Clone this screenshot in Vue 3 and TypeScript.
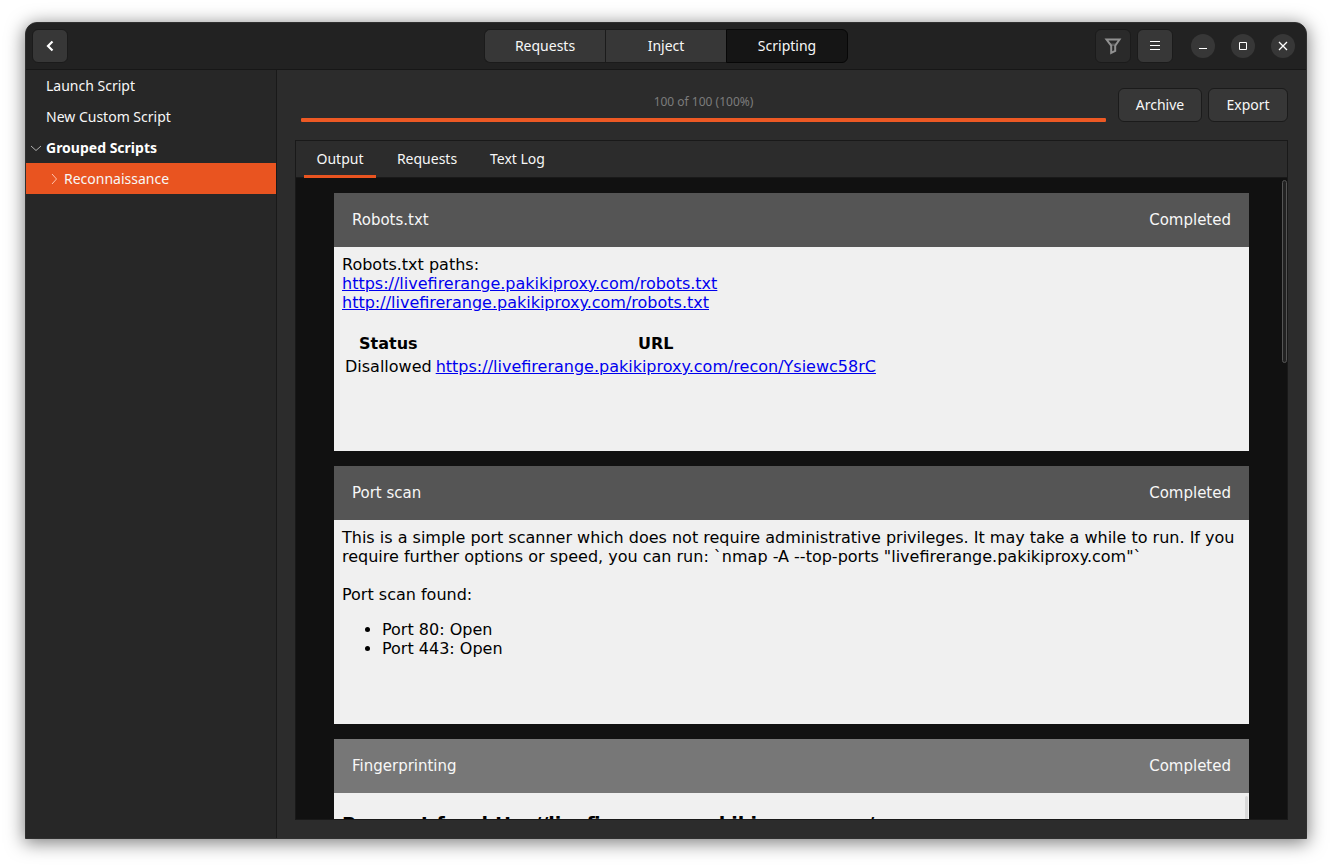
<script setup lang="ts">
import { ref } from 'vue'

const views = ['Requests', 'Inject', 'Scripting']
const activeView = ref('Scripting')
const tabs = ['Output', 'Requests', 'Text Log']
const activeTab = ref('Output')
const progress = { done: 100, total: 100 }
const percent = Math.round((progress.done / progress.total) * 100)
const host = 'livefirerange.pakikiproxy.com'
</script>

<template>
  <div class="desktop">
    <div class="window">
      <header class="titlebar">
        <div class="side">
          <button class="btn icon" aria-label="Back">
            <svg width="16" height="16" viewBox="0 0 16 16"><path d="M10.5 3.5 6 8 10.5 12.5" fill="none" stroke="#fff" stroke-width="2.2" /></svg>
          </button>
        </div>
        <nav class="switcher">
          <button v-for="v in views" :key="v" :class="{ on: v === activeView }" @click="activeView = v">{{ v }}</button>
        </nav>
        <div class="side end">
          <button class="btn icon dim" aria-label="Filter">
            <svg width="18" height="18" viewBox="0 0 18 18"><path d="M2.5 2.5H15.5L11.2 8.7V14L7.2 16V8.7Z" fill="none" stroke="#919191" stroke-width="2" /><path d="M5.5 6.5H12.5L10.5 9H7.5Z" fill="#919191" opacity=".45" /></svg>
          </button>
          <button class="btn icon" aria-label="Menu">
            <svg width="16" height="16" viewBox="0 0 16 16"><path d="M3 3.5H13M3 7.5H13M3 11.5H13" stroke="#fff" /></svg>
          </button>
          <div class="controls">
            <button aria-label="Minimize"><svg width="16" height="16" viewBox="0 0 16 16"><path d="M4 10.5H12" stroke="#fff" /></svg></button>
            <button aria-label="Maximize"><svg width="16" height="16" viewBox="0 0 16 16"><path d="M4.5 4.5H11.5V11.5H4.5Z" fill="none" stroke="#fff" /></svg></button>
            <button aria-label="Close"><svg width="16" height="16" viewBox="0 0 16 16"><path d="M4 4 12 12M12 4 4 12" stroke="#fff" stroke-width="1.3" /></svg></button>
          </div>
        </div>
      </header>
      <div class="body">
        <aside class="sidebar">
          <button class="row">Launch Script</button>
          <button class="row">New Custom Script</button>
          <button class="row group" aria-expanded="true">
            <svg width="12" height="12" viewBox="0 0 12 12"><path d="M1 4 6 8.5 11 4" fill="none" stroke="#b0b0b0" /></svg>Grouped Scripts
          </button>
          <button class="row child" aria-expanded="false">
            <svg width="12" height="12" viewBox="0 0 12 12"><path d="M4 1 8.5 6 4 11" fill="none" stroke="#ffc3ae" /></svg>Reconnaissance
          </button>
        </aside>
        <main class="main">
          <div class="toolbar">
            <div class="progress">
              <span class="label">{{ progress.done }} of {{ progress.total }} ({{ percent }}%)</span>
              <div class="track"><div class="fill" :style="{ width: percent + '%' }"></div></div>
            </div>
            <div class="actions">
              <button class="btn">Archive</button>
              <button class="btn">Export</button>
            </div>
          </div>
          <section class="panel">
            <nav class="tabs">
              <button v-for="t in tabs" :key="t" :class="{ on: t === activeTab }" @click="activeTab = t">{{ t }}</button>
            </nav>
            <div class="output">
              <article class="card">
                <header><span>Robots.txt</span><span>Completed</span></header>
                <div class="content">
                  Robots.txt paths:<br />
                  <a :href="`https://${host}/robots.txt`">https://{{ host }}/robots.txt</a><br />
                  <a :href="`http://${host}/robots.txt`">http://{{ host }}/robots.txt</a><br /><br />
                  <table>
                    <thead><tr><th>Status</th><th>URL</th></tr></thead>
                    <tbody>
                      <tr><td>Disallowed</td><td><a :href="`https://${host}/recon/Ysiewc58rC`">https://{{ host }}/recon/Ysiewc58rC</a></td></tr>
                    </tbody>
                  </table>
                </div>
              </article>
              <article class="card">
                <header><span>Port scan</span><span>Completed</span></header>
                <div class="content">
                  This is a simple port scanner which does not require administrative privileges. It may take a while to run. If you require further options or speed, you can run: `nmap -A --top-ports "{{ host }}"`<br /><br />
                  Port scan found:
                  <ul><li>Port 80: Open</li><li>Port 443: Open</li></ul>
                </div>
              </article>
              <article class="card hover">
                <header><span>Fingerprinting</span><span>Completed</span></header>
                <div class="content">
                  <h3>Request for: http://{{ host }}/</h3>
                  <div class="inner-thumb"></div>
                </div>
              </article>
              <div class="thumb"></div>
            </div>
          </section>
        </main>
      </div>
    </div>
  </div>
</template>

<style>
body { margin: 0; background: #fff; }
</style>

<style scoped>
* { box-sizing: border-box; }
button { font: inherit; color: inherit; border: 0; padding: 0; background: none; }
svg { display: block; flex: none; }
.desktop { height: 100vh; padding: 22px 25px 28px; font: 14px/20px "Noto Sans", "Open Sans", sans-serif; color: #f7f7f7; }
.window { height: 100%; display: flex; flex-direction: column; overflow: hidden; background: #2c2c2c; border: 1px solid #303030; border-radius: 12px 12px 0 0; box-shadow: 0 3px 18px 1px rgba(0, 0, 0, .5); }
.titlebar { flex: none; display: flex; align-items: center; height: 47px; padding: 0 6px; background: #222; border-bottom: 1px solid #171717; }
.side { flex: 1; display: flex; align-items: center; }
.side.end { justify-content: flex-end; gap: 6px; }
.btn { display: flex; align-items: center; justify-content: center; height: 34px; padding: 0 16px; background: #373737; border: 1px solid #1b1b1b; border-radius: 6px; }
.btn.icon { width: 36px; padding: 0; }
.btn.dim { background: #2a2a2a; }
.switcher { display: flex; }
.switcher button { width: 121px; height: 34px; background: #373737; border: 1px solid #1b1b1b; border-right: 0; }
.switcher button:first-child { border-radius: 6px 0 0 6px; }
.switcher button:last-child { width: 122px; border-right: 1px solid #070707; border-radius: 0 6px 6px 0; }
.switcher button.on { background: #151515; border-color: #070707; }
.controls { display: flex; gap: 16px; margin: 0 5px 0 12px; }
.controls button { width: 24px; height: 24px; display: flex; align-items: center; justify-content: center; background: #373737; border-radius: 50%; }
.body { flex: 1; display: flex; min-height: 0; }
.sidebar { flex: none; width: 251px; background: #272727; border-right: 1px solid #191919; }
.row { display: flex; align-items: center; gap: 4px; width: 100%; height: 31px; padding-left: 20px; text-align: left; }
.row.group { padding-left: 4px; font-weight: 700; color: #fff; }
.row.child { padding-left: 22px; background: #e95420; }
.main { flex: 1; min-width: 0; display: flex; flex-direction: column; gap: 18px; padding: 18px; }
.toolbar { display: flex; gap: 12px; padding-left: 6px; }
.progress { flex: 1; display: flex; flex-direction: column; justify-content: flex-end; }
.label { font-size: 12px; line-height: 16px; text-align: center; color: #7c7c7c; margin-bottom: 8px; }
.track { height: 4px; background: #222; }
.fill { height: 100%; background: #ed5924; border-radius: 1px; }
.actions { display: flex; gap: 6px; }
.actions .btn { min-width: 80px; }
.actions .btn:first-child { min-width: 84px; }
.panel { flex: 1; min-height: 0; display: flex; flex-direction: column; border: 1px solid #191919; }
.tabs { flex: none; display: flex; gap: 8px; height: 37px; padding: 0 8px; border-bottom: 1px solid #191919; }
.tabs button { height: 37px; min-width: 72px; padding: 2px 12px 0; border-bottom: 3px solid transparent; }
.tabs button.on { border-color: #e95420; }
.tabs button:nth-child(2) { min-width: 86px; }
.output { flex: 1; min-height: 0; position: relative; overflow: hidden; padding: 15px 38px 0; background: #111; }
.card { margin-bottom: 15px; font-family: "DejaVu Sans", sans-serif; }
.card header { display: flex; justify-content: space-between; align-items: center; height: 54px; padding: 0 18px; background: #555; font-size: 15px; }
.card.hover header { background: #777; }
.content { position: relative; height: 204px; padding: 8px; overflow: hidden; font-size: 16px; line-height: 19px; color: #000; background: #f0f0f0; }
.content a { color: #0000ee; }
table { border-spacing: 2px; }
th, td { padding: 1px; }
ul { margin: 16px 0; padding-left: 40px; }
h3 { margin: 12px 0 19px; font-size: 19px; line-height: 22px; }
.inner-thumb { position: absolute; top: 3px; right: 1px; width: 3px; height: 120px; border-radius: 2px; background: #d9d9d9; }
.thumb { position: absolute; top: 2px; right: 0; width: 5px; height: 183px; border: 1px solid #555; border-radius: 3px; background: #222; }
</style>
